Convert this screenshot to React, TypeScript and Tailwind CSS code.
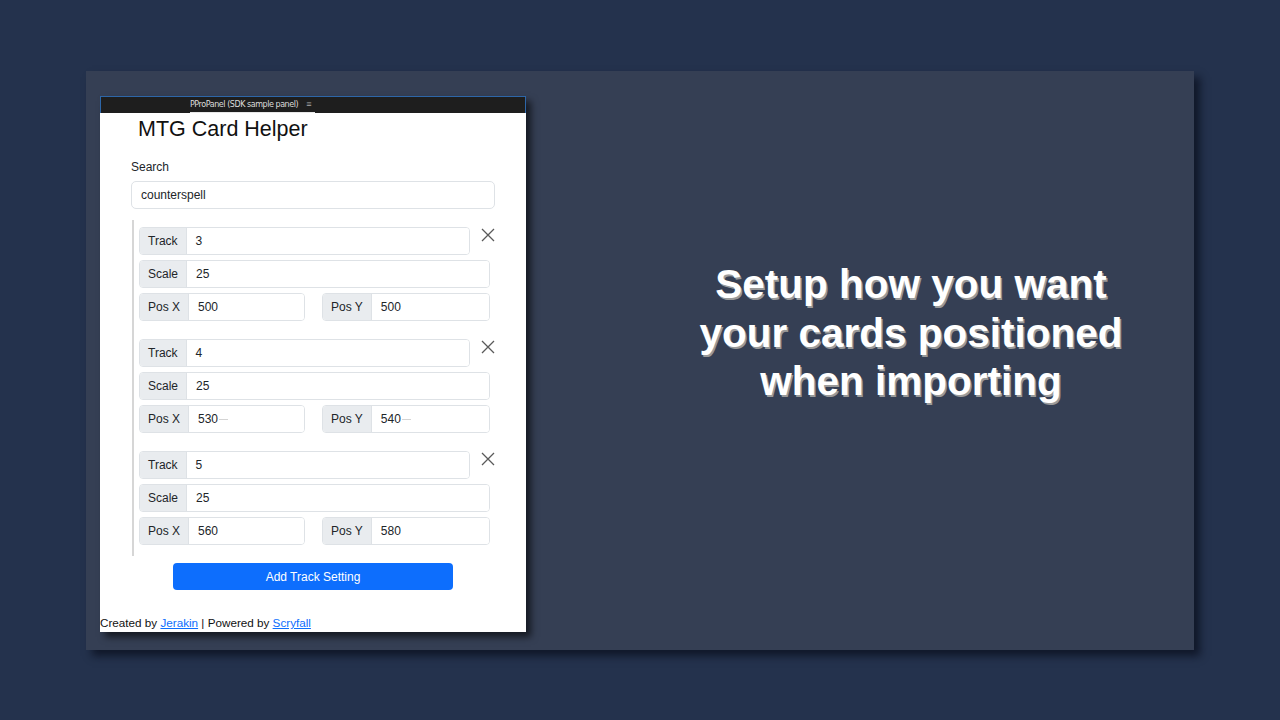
import React from "react";

function XIcon() {
  return (
    <svg width="14" height="14" viewBox="0 0 14 14" className="block">
      <path d="M1 1 L13 13 M13 1 L1 13" stroke="#5a5a5a" strokeWidth="1.3" fill="none" />
    </svg>
  );
}

function Field({ label, value, width, dash }: { label: string; value: string; width: string; dash?: boolean }) {
  return (
    <div className={`flex h-[28px] ${width} rounded-[4px] border border-[#dee2e6] overflow-hidden`}>
      <div className="flex items-center px-[8px] bg-[#e9ecef] border-r border-[#dee2e6] text-[12px] text-[#212529]">
        {label}
      </div>
      <div className="flex flex-1 items-center px-[9px] bg-white text-[12px] text-[#212529]">
        {value}
        {dash && <span className="ml-[1px] inline-block w-[9px] h-[1px] bg-[#d4d4d4]" />}
      </div>
    </div>
  );
}

function Group({ track, x, y, dash }: { track: string; x: string; y: string; dash?: boolean }) {
  return (
    <div className="flex flex-col gap-[5px]">
      <div className="flex items-start">
        <Field label="Track" value={track} width="w-[333px]" />
        <div className="ml-[11px] mt-[1px]">
          <XIcon />
        </div>
      </div>
      <Field label="Scale" value="25" width="w-[351px]" />
      <div className="flex gap-[17px]">
        <Field label="Pos X" value={x} width="w-[166px]" dash={dash} />
        <Field label="Pos Y" value={y} width="w-[168px]" dash={dash} />
      </div>
    </div>
  );
}

export default function App() {
  return (
    <div className="w-[1280px] h-[720px] bg-[#24324d] pt-[71px] pl-[86px] font-['Liberation_Sans',Arial,sans-serif]">
      <div className="flex items-start w-[1108px] h-[579px] bg-[#353f54] shadow-[6px_6px_8px_rgba(10,15,30,0.75)] pl-[14px] pt-[25px]">
        <div className="w-[426px] h-[536px] bg-white flex flex-col shadow-[5px_5px_7px_rgba(0,0,0,0.6)]">
          <div className="h-[17px] bg-[#1e1e1e] border-t border-x border-[#2d66a8] flex items-end pl-[89px]">
            <div className="flex items-center h-[16px] border-b border-[#e8e8e8] pr-[4px]">
              <span className="text-[8px] text-[#dcdcdc] font-['DejaVu_Sans',sans-serif] tracking-[-0.45px]">
                PProPanel (SDK sample panel)
              </span>
              <span className="ml-[8px] text-[9px] text-[#aaaaaa] leading-none">≡</span>
            </div>
          </div>
          <div className="pl-[31px] pr-[31px]">
            <div className="ml-[7px] h-[30px] leading-[30px] text-[21.5px] text-[#111] mt-[1px]">MTG Card Helper</div>
            <div className="mt-[14px] h-[18px] leading-[18px] text-[12px] text-[#212529]">Search</div>
            <div className="mt-[5px] h-[28px] w-[364px] rounded-[5px] border border-[#dee2e6] flex items-center px-[9px] text-[12px] text-[#212529]">
              counterspell
            </div>
            <div className="mt-[11px] ml-[1px] border-l-2 border-[#d6d6d6] pl-[5px] pt-[7px] pb-[11px] flex flex-col gap-[18px]">
              <Group track="3" x="500" y="500" />
              <Group track="4" x="530" y="540" dash />
              <Group track="5" x="560" y="580" />
            </div>
            <div className="mt-[7px] flex justify-center w-[364px]">
              <div className="w-[280px] h-[27px] rounded-[4px] bg-[#0d6efd] text-white text-[12px] flex items-center justify-center">
                Add Track Setting
              </div>
            </div>
          </div>
          <div className="mt-auto mb-[1px] text-[11.7px] leading-[16px] text-[#111]">
            Created by <span className="text-[#0d6efd] underline">Jerakin</span> | Powered by{" "}
            <span className="text-[#0d6efd] underline">Scryfall</span>
          </div>
        </div>
        <div className="flex-1 mt-[164px] pl-[102px] text-center text-white font-bold text-[40.5px] leading-[48.5px] [text-shadow:1.5px_1.5px_0.5px_#9a9a9a] font-['Liberation_Sans',Arial,sans-serif]">
          Setup how you want
          <br />
          your cards positioned
          <br />
          when importing
        </div>
      </div>
    </div>
  );
}
